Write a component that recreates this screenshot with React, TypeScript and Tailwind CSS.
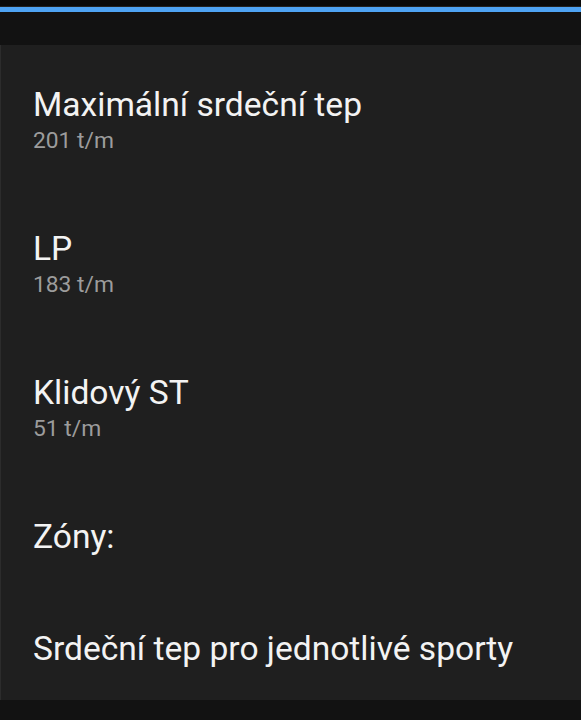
import React from 'react';

type Row = { title: string; value?: string };

const ROWS: Row[] = [
    { title: 'Maximální srdeční tep', value: '201 t/m' },
    { title: 'LP', value: '183 t/m' },
    { title: 'Klidový ST', value: '51 t/m' },
    { title: 'Zóny:' },
    { title: 'Srdeční tep pro jednotlivé sporty' },
];

const SettingRow: React.FC<{ row: Row }> = ({ row }) => (
    <div className="shrink-0 flex flex-col pt-[40px] pb-[32px] px-[32px]">
        <div className="text-[33.6px] leading-[40px] text-[#f3f3f3] whitespace-nowrap">{row.title}</div>
        {row.value && <div className="text-[22.8px] leading-[28px] text-[#9c9c9c] my-[2px]">{row.value}</div>}
    </div>
);

const App: React.FC = () => {
    return (
        <div className="w-[581px] h-[720px] overflow-hidden bg-[#121212] flex flex-col" style={{ fontFamily: 'Roboto, sans-serif' }}>
            <div className="shrink-0 h-[7px] bg-[#0a0a0a] border-b border-[#222]" />
            <div className="shrink-0 h-[5px] bg-[#4ea3f3]" />
            <div className="shrink-0 h-[33px] bg-[#121212]" />
            <div className="shrink-0 h-[655px] overflow-hidden bg-[#1f1f1f] border-l border-[#2c2c2c] flex flex-col">
                {ROWS.map((row) => (
                    <SettingRow key={row.title} row={row} />
                ))}
            </div>
        </div>
    );
};

export default App;
